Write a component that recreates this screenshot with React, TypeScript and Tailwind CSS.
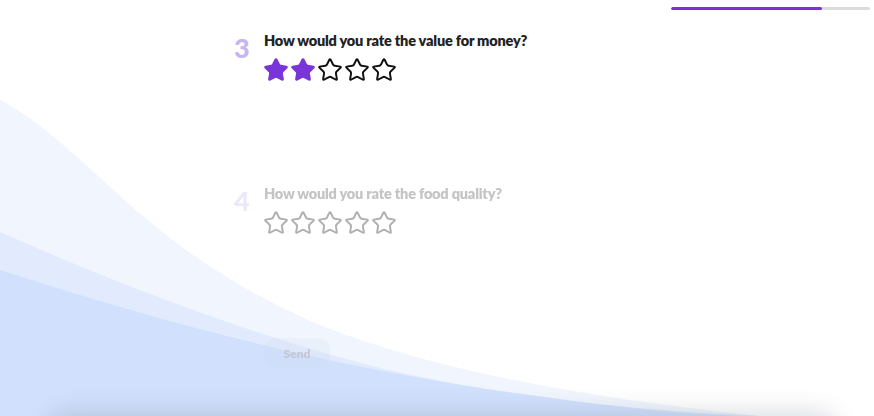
import React from "react";

const STAR =
  "M11.525 2.295a.53.53 0 0 1 .95 0l2.31 4.679a2.123 2.123 0 0 0 1.595 1.16l5.166.756a.53.53 0 0 1 .294.904l-3.736 3.638a2.123 2.123 0 0 0-.611 1.878l.882 5.14a.53.53 0 0 1-.771.56l-4.618-2.428a2.122 2.122 0 0 0-1.973 0L6.396 21.01a.53.53 0 0 1-.77-.56l.881-5.139a2.122 2.122 0 0 0-.611-1.879L2.16 9.795a.53.53 0 0 1 .294-.906l5.165-.755a2.122 2.122 0 0 0 1.597-1.16z";

function Star({ filled, color }: { filled: boolean; color: string }) {
  return (
    <svg width="26" height="26" viewBox="0 0 24 24" className="block">
      <path
        d={STAR}
        fill={filled ? color : "none"}
        stroke={color}
        strokeWidth={1.8}
        strokeLinejoin="round"
      />
    </svg>
  );
}

function Stars({ value, filledColor, emptyColor }: { value: number; filledColor: string; emptyColor: string }) {
  return (
    <div className="flex gap-[1px]">
      {[1, 2, 3, 4, 5].map((i) => (
        <Star key={i} filled={i <= value} color={i <= value ? filledColor : emptyColor} />
      ))}
    </div>
  );
}

export default function App() {
  const font = { fontFamily: "Lato, 'Open Sans', sans-serif" };
  return (
    <div className="relative w-[874px] h-[416px] overflow-hidden bg-white" style={font}>
      <svg className="absolute inset-0" width="874" height="416" viewBox="0 0 874 416">
        <path d="M0 100 C 40 120, 80 160, 130 205 C 190 258, 250 295, 320 325 C 420 365, 560 395, 760 416 L0 416 Z" fill="#f0f5fe" />
        <path d="M0 232 C 120 285, 250 335, 380 368 C 500 395, 600 408, 760 416 L0 416 Z" fill="#e1ebfd" />
        <path d="M0 270 C 150 318, 300 360, 480 388 C 580 402, 650 412, 740 416 L0 416 Z" fill="#d1e1fd" />
      </svg>
      <div className="absolute left-[50px] right-[40px] top-[416px] h-[40px] rounded-[20px] shadow-[0_0_22px_6px_rgba(60,70,90,0.16)]" />

      <div className="relative flex flex-col">
        <div className="flex justify-end pt-[7px] pr-[4px]">
          <div className="w-[199px] h-[3px] rounded-full bg-[#dcdcdc] overflow-hidden">
            <div className="h-full w-[151px] rounded-full bg-[#7b2fd8]" />
          </div>
        </div>

        <div className="ml-[234px] mt-[22px] flex">
          <div className="w-[30px] text-[27px] leading-[26px] font-black text-[#c6b5f1] mt-[3px]">3</div>
          <div className="flex flex-col">
            <div className="text-[14.5px] leading-[18px] font-extrabold text-[#222222] tracking-[-0.2px]">
              How would you rate the value for money?
            </div>
            <div className="mt-[7px] -ml-[1px]">
              <Stars value={2} filledColor="#7a35d8" emptyColor="#111111" />
            </div>
          </div>
        </div>

        <div className="ml-[234px] mt-[102px] flex blur-[0.6px]">
          <div className="w-[30px] text-[27px] leading-[26px] font-black text-[#ece8fb] mt-[3px]">4</div>
          <div className="flex flex-col">
            <div className="text-[14.5px] leading-[18px] font-extrabold text-[#c4c4c4] tracking-[-0.2px]">
              How would you rate the food quality?
            </div>
            <div className="mt-[7px] -ml-[1px]">
              <Stars value={0} filledColor="#b5b5b5" emptyColor="#b0b0b0" />
            </div>
          </div>
        </div>

        <div className="ml-[264px] mt-[102px] flex blur-[0.5px]">
          <div className="w-[66px] h-[31px] rounded-[12px] bg-[rgba(200,210,230,0.14)] flex items-center justify-center text-[12px] font-extrabold text-[#c3c8d2]">
            Send
          </div>
        </div>
      </div>
    </div>
  );
}
